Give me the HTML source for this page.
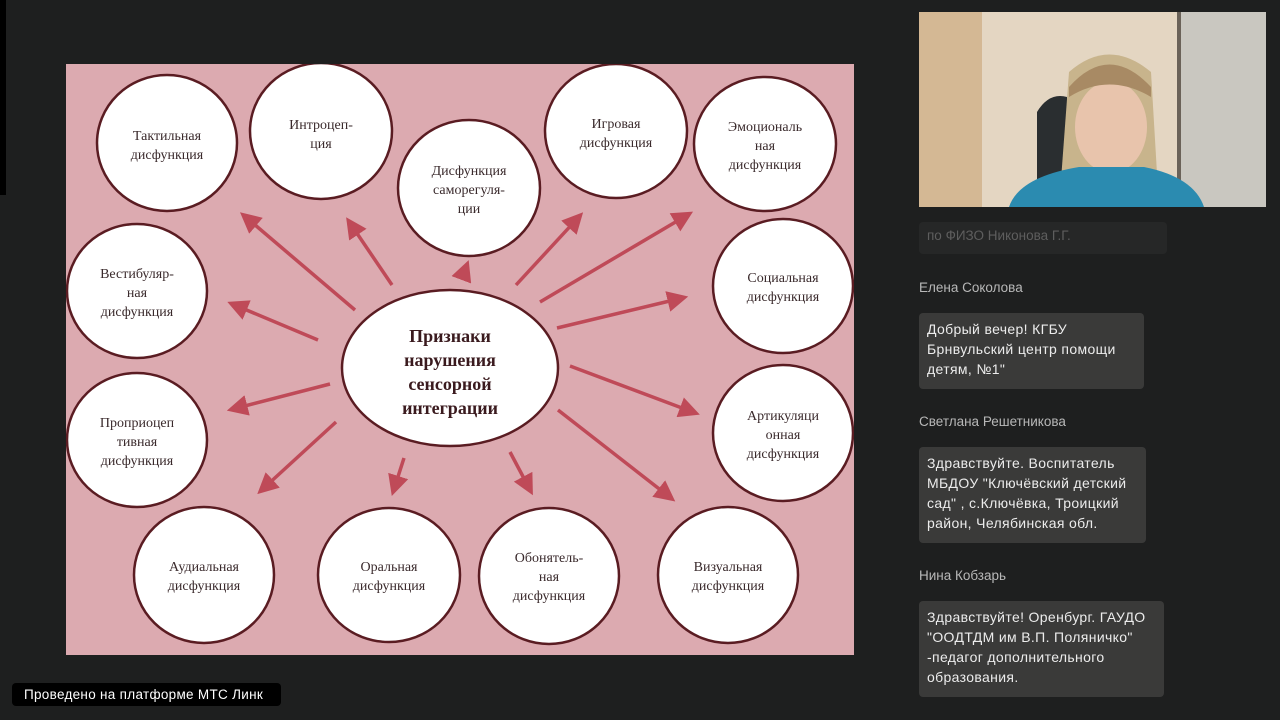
<!DOCTYPE html>
<html><head><meta charset="utf-8"><style>
body{margin:0;width:1280px;height:720px;background:#1e1f1f;overflow:hidden;position:relative;font-family:"Liberation Sans",sans-serif}
.a{position:absolute}
.name{position:absolute;left:919px;color:#b8b8b8;font-size:13.5px}
.bub{position:absolute;left:919px;background:#3a3a39;border-radius:4px;color:#ececec;font-size:14px;letter-spacing:0.35px;line-height:20px;padding:6px 8px;box-sizing:border-box}
</style></head><body>
<div class="a" style="left:0;top:0;width:6px;height:195px;background:#000"></div>
<svg class="a" style="left:66px;top:64px" width="788" height="591" viewBox="66 64 788 591">
<defs><marker id="m" markerWidth="6" markerHeight="6" refX="3" refY="3" orient="auto" markerUnits="strokeWidth"><path d="M0,0 L6,3 L0,6 z" fill="#bf4a58"/></marker></defs>
<rect x="66" y="64" width="788" height="591" fill="#dcaab0"/>
<g stroke="#bf4a58" stroke-width="3.5" marker-end="url(#m)" fill="none">
<line x1="355" y1="310" x2="248" y2="219"/><line x1="392" y1="285" x2="352" y2="226"/><line x1="462" y1="278" x2="465" y2="270"/><line x1="516" y1="285" x2="576" y2="220"/><line x1="540" y1="302" x2="684" y2="217"/><line x1="318" y1="340" x2="237" y2="306"/><line x1="557" y1="328" x2="678" y2="299"/><line x1="330" y1="384" x2="237" y2="408"/><line x1="570" y1="366" x2="690" y2="411"/><line x1="336" y1="422" x2="265" y2="487"/><line x1="404" y1="458" x2="395" y2="486"/><line x1="510" y1="452" x2="528" y2="486"/><line x1="558" y1="410" x2="667" y2="495"/>
</g>
<g fill="#fff" stroke="#5a1c22" stroke-width="2.5">
<ellipse cx="167" cy="143" rx="70" ry="68"/><ellipse cx="321" cy="131" rx="71" ry="68"/><ellipse cx="469" cy="188" rx="71" ry="68"/><ellipse cx="616" cy="131" rx="71" ry="67"/><ellipse cx="765" cy="144" rx="71" ry="67"/><ellipse cx="137" cy="291" rx="70" ry="67"/><ellipse cx="783" cy="286" rx="70" ry="67"/><ellipse cx="450" cy="368" rx="108" ry="78"/><ellipse cx="137" cy="440" rx="70" ry="67"/><ellipse cx="783" cy="433" rx="70" ry="68"/><ellipse cx="204" cy="575" rx="70" ry="68"/><ellipse cx="389" cy="575" rx="71" ry="67"/><ellipse cx="549" cy="576" rx="70" ry="68"/><ellipse cx="728" cy="575" rx="70" ry="68"/>
</g>
<g font-family="Liberation Serif,serif" font-size="14" fill="#3a2a2c" text-anchor="middle">
<text x="167" y="140">Тактильная</text><text x="167" y="159">дисфункция</text>
<text x="321" y="129">Интроцеп-</text><text x="321" y="148">ция</text>
<text x="469" y="175">Дисфункция</text><text x="469" y="194">саморегуля-</text><text x="469" y="213">ции</text>
<text x="616" y="128">Игровая</text><text x="616" y="147">дисфункция</text>
<text x="765" y="131">Эмоциональ</text><text x="765" y="150">ная</text><text x="765" y="169">дисфункция</text>
<text x="137" y="278">Вестибуляр-</text><text x="137" y="297">ная</text><text x="137" y="316">дисфункция</text>
<text x="783" y="282">Социальная</text><text x="783" y="301">дисфункция</text>
<text x="137" y="427">Проприоцеп</text><text x="137" y="446">тивная</text><text x="137" y="465">дисфункция</text>
<text x="783" y="420">Артикуляци</text><text x="783" y="439">онная</text><text x="783" y="458">дисфункция</text>
<text x="204" y="571">Аудиальная</text><text x="204" y="590">дисфункция</text>
<text x="389" y="571">Оральная</text><text x="389" y="590">дисфункция</text>
<text x="549" y="562">Обонятель-</text><text x="549" y="581">ная</text><text x="549" y="600">дисфункция</text>
<text x="728" y="571">Визуальная</text><text x="728" y="590">дисфункция</text>
</g>
<g font-family="Liberation Serif,serif" font-size="18" font-weight="bold" fill="#3a1a1e" text-anchor="middle">
<text x="450" y="342">Признаки</text><text x="450" y="366">нарушения</text><text x="450" y="390">сенсорной</text><text x="450" y="414">интеграции</text>
</g>
</svg>
<svg class="a" style="left:919px;top:12px" width="347" height="195">
<rect width="347" height="195" fill="#d8c8b0"/>
<rect width="63" height="195" fill="#d4b894"/>
<rect x="63" width="198" height="195" fill="#e4d6c2"/>
<rect x="261" width="86" height="195" fill="#c9c7c0"/>
<rect x="258" width="4" height="195" fill="#6a6258"/>
<path d="M118,175 L118,100 Q130,80 148,85 L150,175z" fill="#2a2e30"/>
<path d="M210,100 Q235,110 235,175 L210,175z" fill="#2a2e30"/>
<path d="M150,60 Q190,25 232,60 L240,195 L140,195z" fill="#c8b48c"/>
<ellipse cx="192" cy="115" rx="36" ry="46" fill="#e8c4ac"/>
<path d="M150,75 Q190,30 232,75 L232,85 Q190,60 150,85z" fill="#a88a64"/>
<path d="M90,195 Q100,165 160,155 L225,155 Q275,165 285,195z" fill="#2b8bb0"/>
</svg>
<div class="a" style="left:919px;top:222px;width:248px;height:32px;background:#262727;border-radius:4px;color:#5e5e5e;font-size:13.5px;padding:6px 8px;box-sizing:border-box">по ФИЗО Никонова Г.Г.</div>
<div class="name" style="top:280px">Елена Соколова</div>
<div class="bub" style="top:313px;width:225px;height:76px">Добрый вечер! КГБУ Брнвульский центр помощи детям, №1"</div>
<div class="name" style="top:414px">Светлана Решетникова</div>
<div class="bub" style="top:447px;width:227px;height:96px">Здравствуйте. Воспитатель МБДОУ "Ключёвский детский сад" , с.Ключёвка, Троицкий район, Челябинская обл.</div>
<div class="name" style="top:568px">Нина Кобзарь</div>
<div class="bub" style="top:601px;width:245px;height:96px">Здравствуйте! Оренбург. ГАУДО "ООДТДМ им В.П. Поляничко" -педагог дополнительного образования.</div>
<div class="a" style="left:12px;top:683px;width:269px;height:23px;background:#000;border-radius:4px;color:#fff;font-size:13.5px;letter-spacing:0.3px;line-height:23px;padding-left:12px;box-sizing:border-box">Проведено на платформе МТС Линк</div>
</body></html>
